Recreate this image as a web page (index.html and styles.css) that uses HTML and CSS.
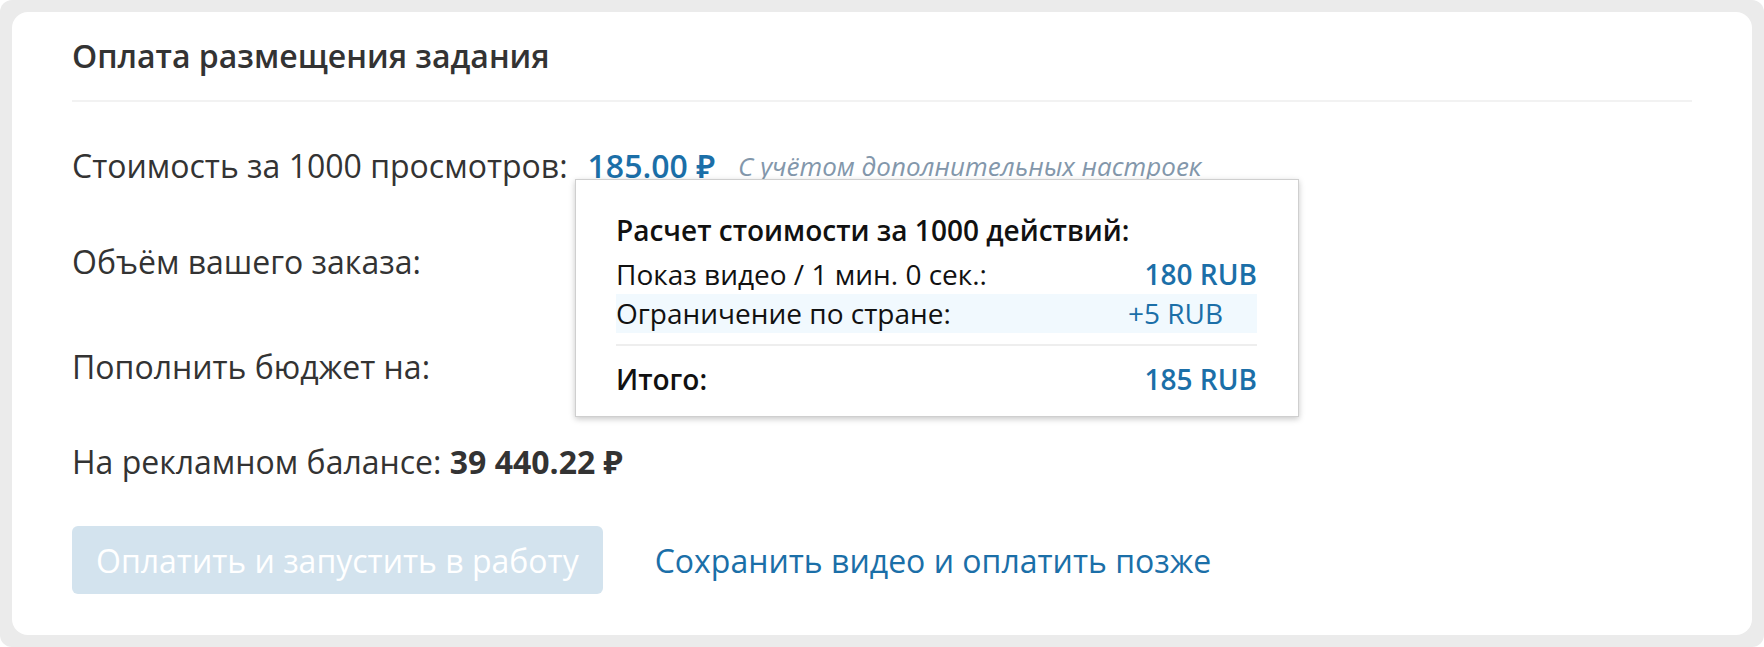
FILE: index.html
```html
<!DOCTYPE html>
<html lang="ru">
<head>
<meta charset="utf-8">
<title>Оплата размещения задания</title>
<link rel="stylesheet" href="styles.css">
</head>
<body>
<div class="frame">
  <div class="card">
    <h2 class="card-title">Оплата размещения задания</h2>
    <div class="row row-price">
      <span class="label">Стоимость за 1000 просмотров:</span>
      <span class="price">185.00 ₽</span>
      <span class="note">С учётом дополнительных настроек</span>
    </div>
    <div class="row row-volume">
      <span class="label">Объём вашего заказа:</span>
    </div>
    <div class="row row-budget">
      <span class="label">Пополнить бюджет на:</span>
    </div>
    <div class="row row-balance">
      <span class="label">На рекламном балансе: <b class="balance">39 440.22 ₽</b></span>
    </div>
    <div class="actions">
      <button class="btn-pay" type="button">Оплатить и запустить в работу</button>
      <a class="link-later" href="#">Сохранить видео и оплатить позже</a>
    </div>
  </div>

  <div class="popup">
    <div class="popup-title">Расчет стоимости за 1000 действий:</div>
    <div class="popup-row">
      <span>Показ видео / 1 мин. 0 сек.:</span>
      <span class="val val-strong">180 RUB</span>
    </div>
    <div class="popup-row popup-row-hl">
      <span>Ограничение по стране:</span>
      <span class="val val-extra">+5 RUB</span>
    </div>
    <div class="popup-total">
      <span class="total-label">Итого:</span>
      <span class="val val-strong">185 RUB</span>
    </div>
  </div>
</div>
</body>
</html>
```

FILE: styles.css
```css
* { box-sizing: border-box; }

html, body {
  margin: 0;
  padding: 0;
  background: #ffffff;
}

body {
  font-family: "Open Sans", "Noto Sans", "Liberation Sans", sans-serif;
  color: #333333;
}

.frame {
  position: relative;
  width: 1764px;
  height: 647px;
  background: #ebebeb;
  border-radius: 12px;
  padding: 12px;
}

.card {
  height: 100%;
  background: #ffffff;
  border-radius: 16px;
  padding: 24px 60px 0 60px;
}

.card-title {
  margin: 0;
  font-size: 32px;
  line-height: 40px;
  font-weight: 600;
  color: #333333;
  padding-bottom: 24px;
  border-bottom: 2px solid #f2f2f2;
}

.row {
  display: flex;
  align-items: center;
  height: 40px;
  font-size: 32px;
  line-height: 40px;
  white-space: nowrap;
}

.row-price { margin-top: 44px; }
.row-volume { margin-top: 56px; }
.row-budget { margin-top: 65px; }
.row-balance { margin-top: 55px; }

.price {
  margin-left: 20px;
  color: #1b6fa8;
  font-weight: 600;
}

.note {
  margin-left: 23px;
  font-size: 26px;
  font-style: italic;
  color: #8397ab;
}

.balance {
  font-weight: 700;
  color: #333333;
}

.actions {
  display: flex;
  align-items: center;
  margin-top: 44px;
}

.btn-pay {
  height: 68px;
  padding: 0 24px;
  border: 0;
  border-radius: 6px;
  background: #d3e3ee;
  color: #ffffff;
  font-family: inherit;
  font-size: 32px;
  white-space: nowrap;
}

.link-later {
  margin-left: 52px;
  font-size: 32px;
  color: #1b6fa8;
  text-decoration: none;
  white-space: nowrap;
}

/* tooltip over the form */
.popup {
  position: absolute;
  left: 575px;
  top: 179px;
  width: 724px;
  height: 238px;
  background: #ffffff;
  border: 1px solid #cfcfcf;
  box-shadow: 0 2px 6px rgba(0, 0, 0, 0.22);
  padding: 30px 41px 0 40px;
  color: #111111;
  font-size: 28px;
}

.popup-title {
  font-weight: 600;
  line-height: 40px;
  margin-bottom: 5px;
}

.popup-row {
  display: flex;
  justify-content: space-between;
  align-items: center;
  height: 39px;
  line-height: 39px;
}

.popup-row-hl {
  background: #f1f9fe;
}

.popup-total {
  display: flex;
  justify-content: space-between;
  align-items: center;
  margin-top: 11px;
  border-top: 2px solid #eeeeee;
  padding-top: 13px;
  line-height: 40px;
}

.total-label { font-weight: 600; }

.val { color: #1b6fa8; }
.val-strong { font-weight: 600; }
.val-extra { padding-right: 34px; }
```
